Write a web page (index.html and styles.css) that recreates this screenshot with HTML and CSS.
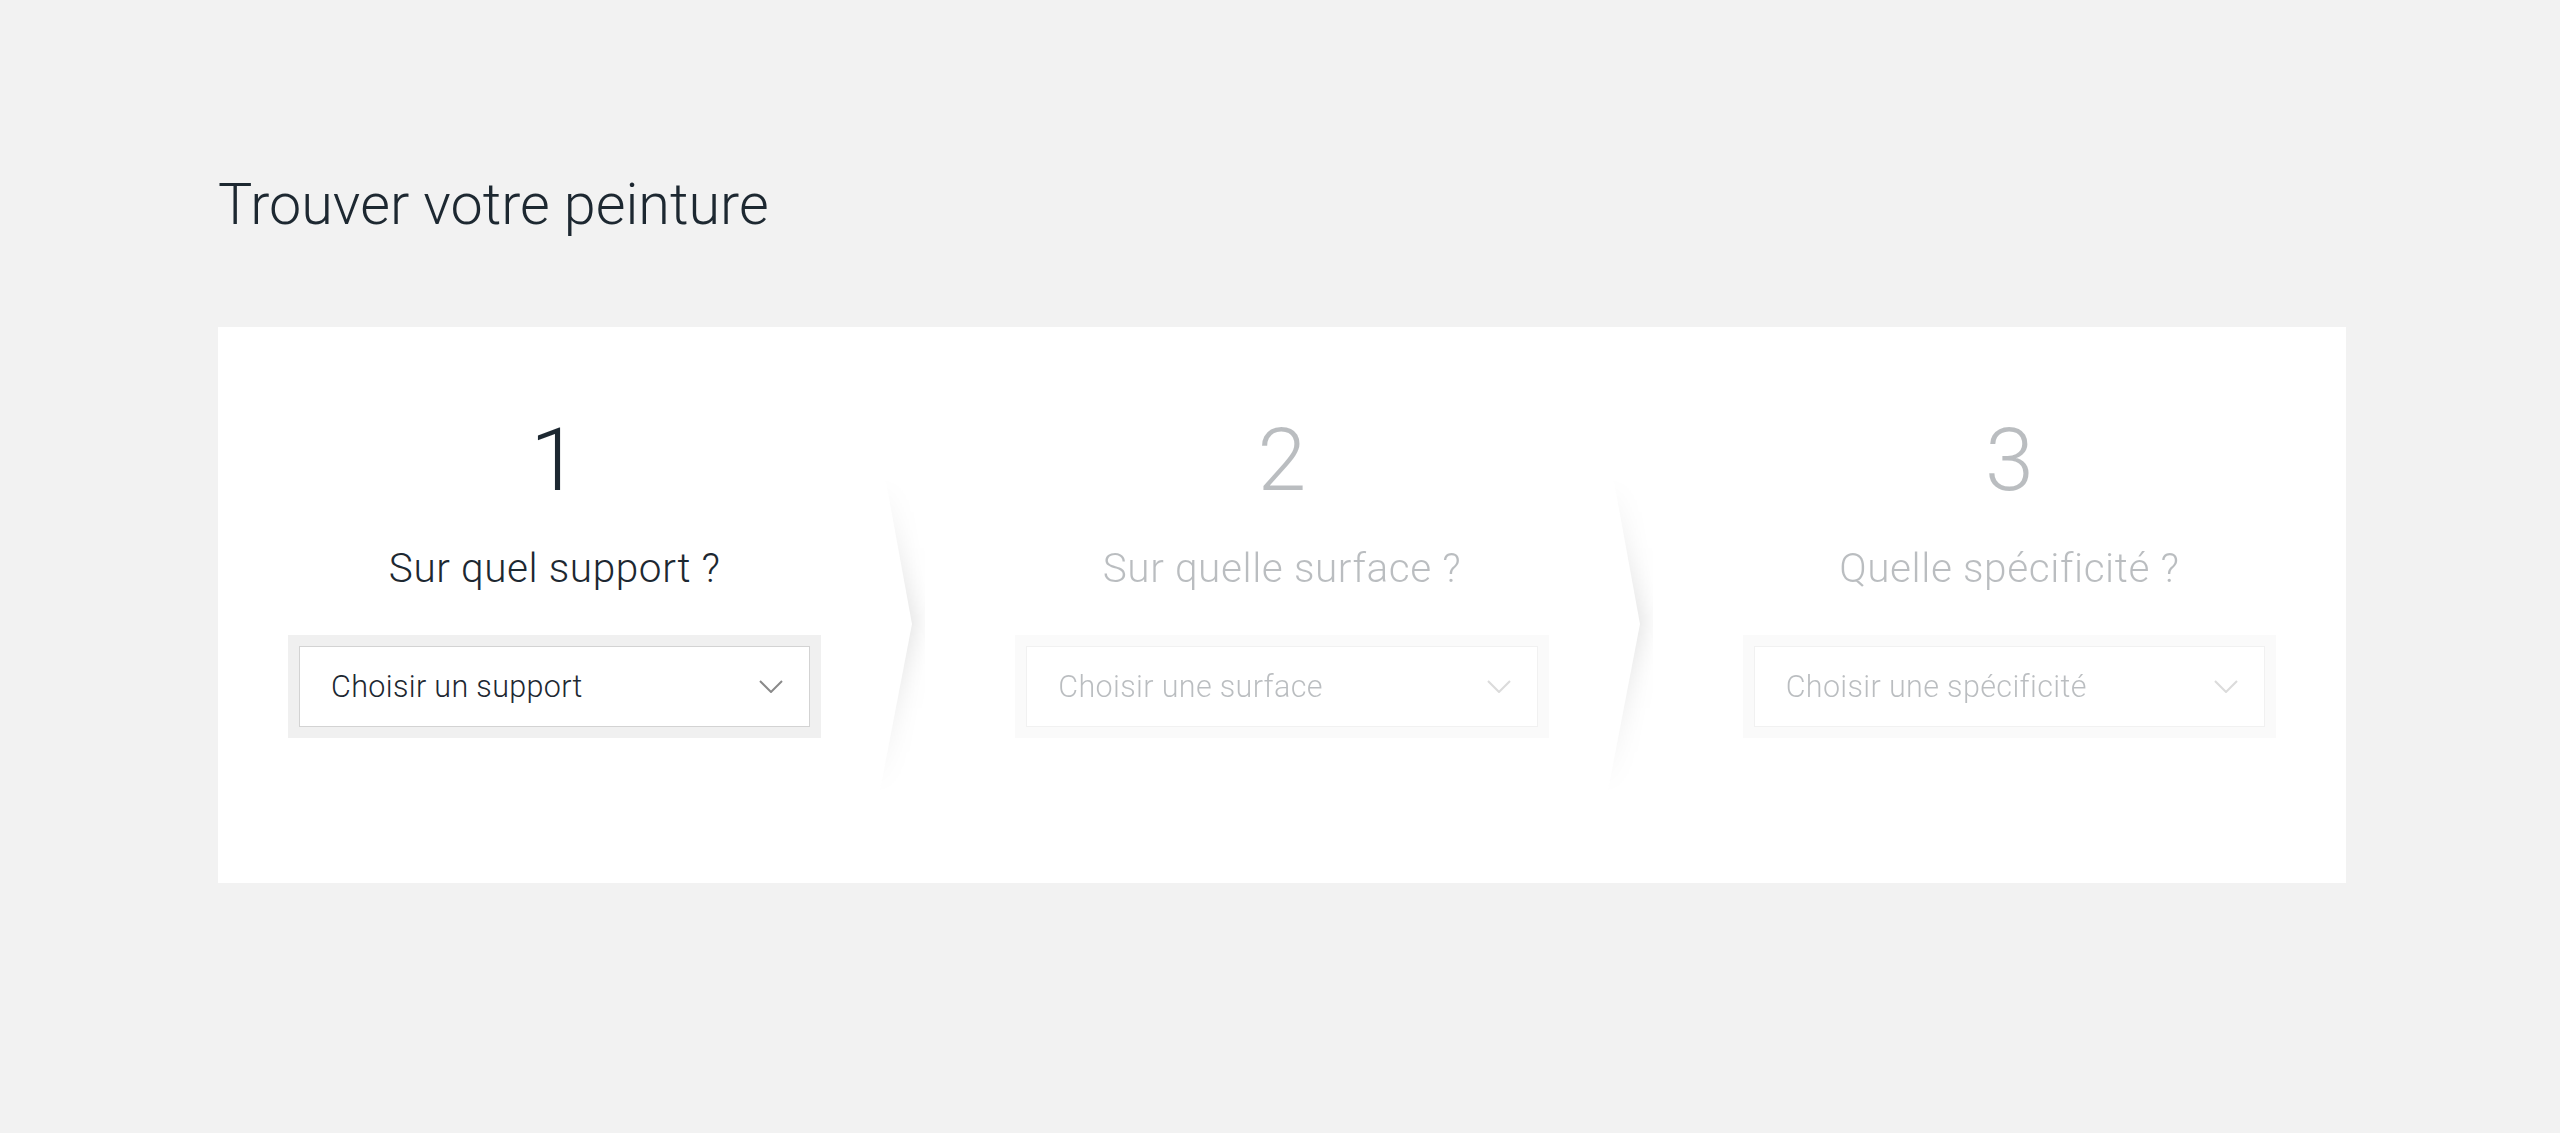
FILE: index.html
```html
<!DOCTYPE html>
<html lang="fr">
<head>
    <meta charset="UTF-8">
    <meta name="viewport" content="width=device-width, initial-scale=1.0">
    <title>Trouver votre peinture</title>
    <link rel="stylesheet" href="styles.css">
</head>
<body>
    <div class="container">
        <h1 class="page-title">Trouver votre peinture</h1>

        <div class="finder">
            <div class="step">
                <div class="step-number">1</div>
                <div class="step-label">Sur quel support ?</div>
                <div class="select-wrap">
                    <div class="select-box">
                        <span>Choisir un support</span>
                        <svg class="chevron" width="24" height="13" viewBox="0 0 24 13"><path d="M1 1 L12 12 L23 1" fill="none" stroke="currentColor" stroke-width="2"/></svg>
                    </div>
                </div>
            </div>

            <div class="step-arrow">
                <svg width="194" height="320" viewBox="0 0 194 320">
                    <defs>
                        <filter id="blur1" x="-50%" y="-20%" width="200%" height="140%"><feGaussianBlur stdDeviation="11"/></filter>
                        <linearGradient id="fade1" x1="0" y1="0" x2="0" y2="1">
                            <stop offset="0" stop-color="#fff" stop-opacity="0"/>
                            <stop offset="0.45" stop-color="#fff" stop-opacity="1"/>
                            <stop offset="1" stop-color="#fff" stop-opacity="0"/>
                        </linearGradient>
                        <mask id="mask1"><rect x="0" y="0" width="194" height="320" fill="url(#fade1)"/></mask>
                    </defs>
                    <polygon points="0,0 64,0 91,148 58,320 0,320" fill="#000" fill-opacity="0.12" filter="url(#blur1)" mask="url(#mask1)" transform="translate(4 0)"/>
                    <polygon points="0,0 64,0 91,148 58,320 0,320" fill="#fff"/>
                </svg>
            </div>

            <div class="step is-disabled">
                <div class="step-number">2</div>
                <div class="step-label">Sur quelle surface ?</div>
                <div class="select-wrap">
                    <div class="select-box">
                        <span>Choisir une surface</span>
                        <svg class="chevron" width="24" height="13" viewBox="0 0 24 13"><path d="M1 1 L12 12 L23 1" fill="none" stroke="currentColor" stroke-width="2"/></svg>
                    </div>
                </div>
            </div>

            <div class="step-arrow">
                <svg width="194" height="320" viewBox="0 0 194 320">
                    <defs>
                        <filter id="blur2" x="-50%" y="-20%" width="200%" height="140%"><feGaussianBlur stdDeviation="11"/></filter>
                        <linearGradient id="fade2" x1="0" y1="0" x2="0" y2="1">
                            <stop offset="0" stop-color="#fff" stop-opacity="0"/>
                            <stop offset="0.45" stop-color="#fff" stop-opacity="1"/>
                            <stop offset="1" stop-color="#fff" stop-opacity="0"/>
                        </linearGradient>
                        <mask id="mask2"><rect x="0" y="0" width="194" height="320" fill="url(#fade2)"/></mask>
                    </defs>
                    <polygon points="0,0 64,0 91,148 58,320 0,320" fill="#000" fill-opacity="0.12" filter="url(#blur2)" mask="url(#mask2)" transform="translate(4 0)"/>
                    <polygon points="0,0 64,0 91,148 58,320 0,320" fill="#fff"/>
                </svg>
            </div>

            <div class="step is-disabled">
                <div class="step-number">3</div>
                <div class="step-label">Quelle spécificité ?</div>
                <div class="select-wrap">
                    <div class="select-box">
                        <span>Choisir une spécificité</span>
                        <svg class="chevron" width="24" height="13" viewBox="0 0 24 13"><path d="M1 1 L12 12 L23 1" fill="none" stroke="currentColor" stroke-width="2"/></svg>
                    </div>
                </div>
            </div>
        </div>
    </div>
</body>
</html>
```

FILE: styles.css
```css
body {
    margin: 0;
    padding: 0 0 0 4px;
    background-color: #f2f2f2;
    font-family: Roboto, "Noto Sans", Arial, sans-serif;
    font-weight: 300;
    color: #1d2831;
}
.container {
    width: 2128px;
    margin: 0 auto;
    padding-top: 171px;
}
.page-title {
    margin: 0 0 88px 0;
    font-size: 57.5px;
    line-height: 68px;
    font-weight: 300;
}
.finder {
    display: grid;
    grid-template-columns: 1fr 194px 1fr 194px 1fr;
    padding: 89px 70px 145px 70px;
    background-color: #fff;
}
.step {
    display: flex;
    flex-direction: column;
    align-items: center;
}
.step.is-disabled {
    opacity: 0.3;
}
.step-number {
    font-size: 88px;
    line-height: 88px;
}
.step-label {
    margin-top: 40px;
    font-size: 40.5px;
    line-height: 48px;
    letter-spacing: 0.6px;
}
.select-wrap {
    align-self: stretch;
    margin-top: 43px;
    padding: 11px;
    background-color: #f0f0f0;
}
.select-box {
    display: flex;
    align-items: center;
    justify-content: space-between;
    height: 79px;
    padding: 0 26px 0 31px;
    border: 1px solid #d3d3d3;
    background-color: #fff;
    font-size: 30.5px;
    letter-spacing: 0.35px;
}
.chevron {
    color: #8a8a8a;
}
.step-arrow {
    height: 0;
}
.step-arrow svg {
    display: block;
    margin-top: 60px;
}
```
